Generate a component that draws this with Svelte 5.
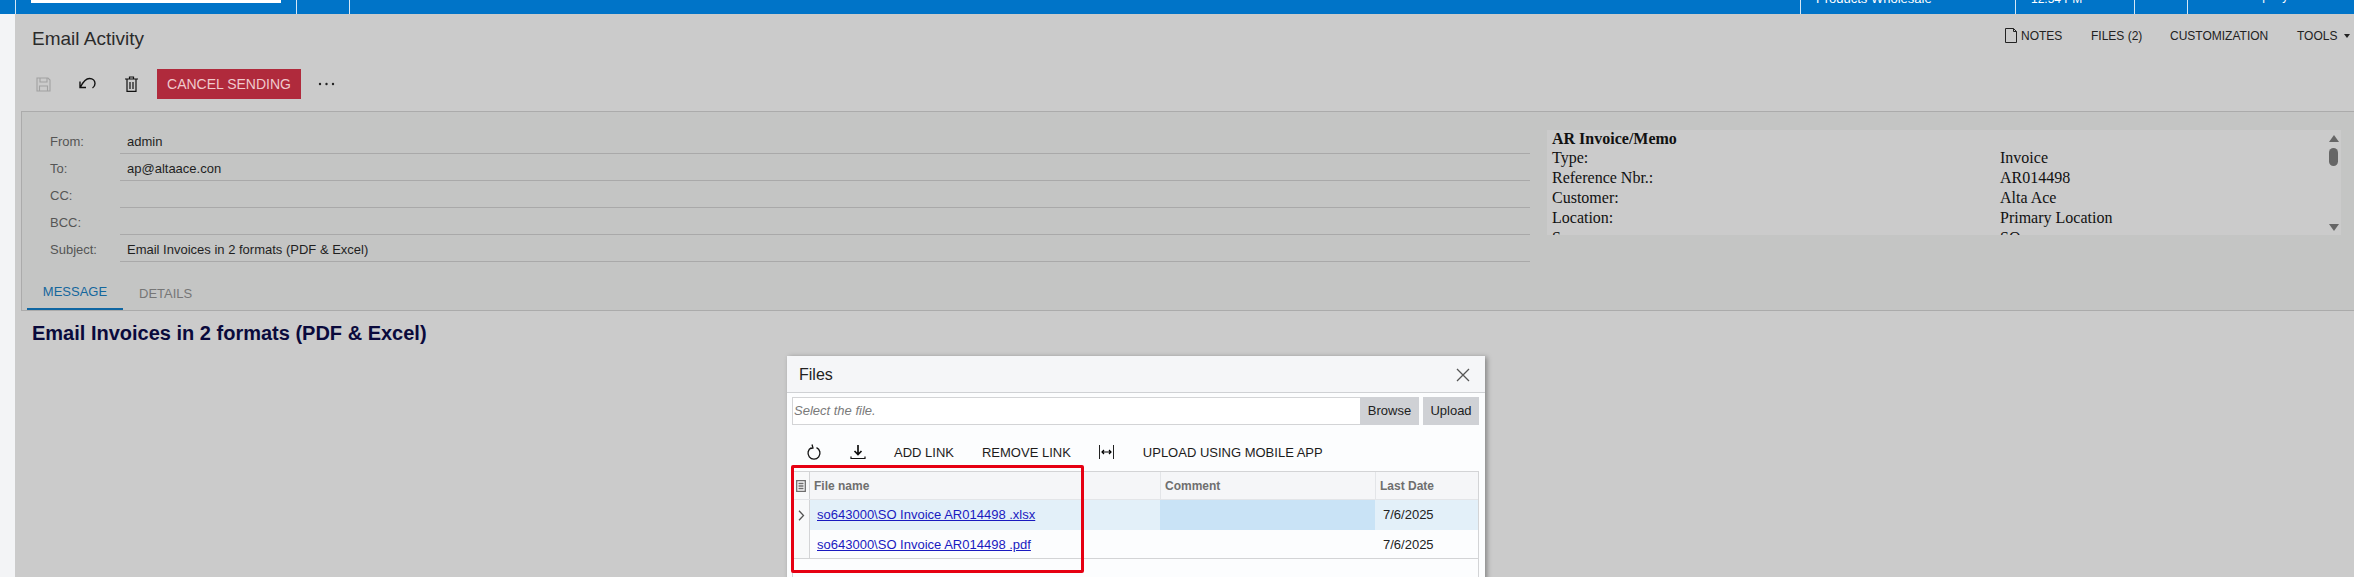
<script>
  const fields = [
    { label: 'From:', value: 'admin' },
    { label: 'To:', value: 'ap@altaace.con' },
    { label: 'CC:', value: '' },
    { label: 'BCC:', value: '' },
    { label: 'Subject:', value: 'Email Invoices in 2 formats (PDF & Excel)' }
  ];
  const summary = [
    ['Type:', 'Invoice'],
    ['Reference Nbr.:', 'AR014498'],
    ['Customer:', 'Alta Ace'],
    ['Location:', 'Primary Location'],
    ['Source:', 'SO']
  ];
  const files = [
    { name: 'so643000\\SO Invoice AR014498 .xlsx', date: '7/6/2025', active: true },
    { name: 'so643000\\SO Invoice AR014498 .pdf', date: '7/6/2025', active: false }
  ];
</script>

<div class="app">
  <header class="topbar">
    <div class="edge"></div>
    <div class="seg logo"><span class="logo-box"></span></div>
    <div class="seg s2"></div>
    <div class="seg grow"></div>
    <div class="seg s4"><span>Products Wholesale</span></div>
    <div class="seg s5"><span>12:54 PM</span></div>
    <div class="seg s6"></div>
    <div class="seg s7"><span>Company</span></div>
  </header>

  <div class="body">
    <div class="rail"></div>
    <main class="main">
      <div class="titlebar">
        <h1>Email Activity</h1>
        <nav class="links">
          <span class="link notes">
            <svg width="14" height="15" viewBox="0 0 14 15" fill="none" stroke="#222" stroke-width="1"><path d="M1.500.5h8l3 3v11h-11zM9.500.5v3h3"/></svg>
            NOTES
          </span>
          <span class="link files-l">FILES (2)</span>
          <span class="link cust">CUSTOMIZATION</span>
          <span class="link tools">TOOLS<i class="caret"></i></span>
        </nav>
      </div>

      <div class="toolbar">
        <span class="tb-icon i-save">
          <svg width="15" height="15" viewBox="0 0 15 15" fill="none" stroke="#a2a2a2" stroke-width="1.100"><path d="M1 1h11l2 2v11H1zM4 1v4h7V1M3.500 14V9h8v5"/></svg>
        </span>
        <span class="tb-icon i-undo">
          <svg width="17" height="14" viewBox="0 0 17 14" fill="none" stroke="#111" stroke-width="1.400"><path d="M1 4.500v6h6M1.500 10C4 5 7 1.500 10.500 1.500c3.500 0 5.500 2.500 5.500 5 0 2-1 3.500-2.500 4.500"/></svg>
        </span>
        <span class="tb-icon i-trash">
          <svg width="13" height="16" viewBox="0 0 13 16" fill="none" stroke="#111" stroke-width="1.200"><path d="M0 3h13M4.500 3V1h4v2M2 3v12.400h9V3M5 6v7M8 6v7"/></svg>
        </span>
        <button class="cancel">CANCEL SENDING</button>
        <span class="dots">
          <svg width="17" height="4" viewBox="0 0 17 4" fill="#222"><circle cx="2" cy="2" r="1.200"/><circle cx="8.500" cy="2" r="1.200"/><circle cx="15" cy="2" r="1.200"/></svg>
        </span>
      </div>

      <section class="form">
        <div class="form-top">
          <div class="fields">
            {#each fields as f}
              <div class="row">
                <label>{f.label}</label>
                <div class="val">{f.value}</div>
              </div>
            {/each}
          </div>
          <div class="summary">
            <div class="sum-body">
              <div class="sum-head">AR Invoice/Memo</div>
              {#each summary as s}
                <div class="sum-row"><span>{s[0]}</span><span>{s[1]}</span></div>
              {/each}
            </div>
            <div class="scroll">
              <i class="up"></i>
              <i class="thumb"></i>
              <i class="down"></i>
            </div>
          </div>
        </div>
        <div class="tabs">
          <span class="tab active">MESSAGE</span>
          <span class="tab">DETAILS</span>
        </div>
      </section>

      <h2 class="msg">Email Invoices in 2 formats (PDF &amp; Excel)</h2>
    </main>
  </div>

  <div class="modal">
    <div class="m-head">
      <span>Files</span>
      <svg width="14" height="14" viewBox="0 0 14 14" stroke="#555" stroke-width="1.300"><path d="M1 1l12 12M13 1L1 13"/></svg>
    </div>
    <div class="upload">
      <div class="file-input"><em>Select the file.</em><span class="browse">Browse</span></div>
      <span class="up-btn">Upload</span>
    </div>
    <div class="m-tools">
      <svg class="i1" width="16" height="18" viewBox="0 0 16 18" fill="none" stroke="#111" stroke-width="1.300"><path d="M10.500 4.700A6 6 0 1 1 5.500 4.700M6 1.500l1 3.500-3.500 1" /></svg>
      <svg class="i2" width="16" height="16" viewBox="0 0 16 16" fill="none" stroke="#111" stroke-width="1.700"><path d="M8 1v9M4.500 7L8 10.500 11.500 7" /><path d="M1 12.500v2h14v-2" stroke-width="1.200"/></svg>
      <span class="t-add">ADD LINK</span>
      <span class="t-rem">REMOVE LINK</span>
      <svg class="i3" width="15" height="14" viewBox="0 0 15 14" fill="none" stroke="#222" stroke-width="1"><path d="M.5 0v14M14.500 0v14" /><path d="M3 7h9M5 5L3 7l2 2M10 5l2 2-2 2" stroke="#000" stroke-width="1.200"/></svg>
      <span class="t-up">UPLOAD USING MOBILE APP</span>
    </div>
    <div class="grid">
      <div class="g-row g-head">
        <div class="gut">
          <svg width="10" height="12" viewBox="0 0 10 12" fill="none" stroke="#6e6e6e" stroke-width="1.300"><path d="M.7.7h8.600v10.600H.7zM2.500 3.500h5M2.500 6h5M2.500 8.500h5"/></svg>
        </div>
        <div class="c1">File name</div>
        <div class="c2">Comment</div>
        <div class="c3">Last Date</div>
      </div>
      {#each files as f}
        <div class="g-row body-row" class:active={f.active}>
          <div class="gut">
            {#if f.active}
              <svg width="7" height="11" viewBox="0 0 7 11" fill="none" stroke="#555" stroke-width="1.300"><path d="M1 .8l4.500 4.700L1 10.200"/></svg>
            {/if}
          </div>
          <div class="c1"><a href="#top">{f.name}</a></div>
          <div class="c2"></div>
          <div class="c3">{f.date}</div>
        </div>
      {/each}
    </div>
  </div>

  <div class="callout"></div>
</div>

<style>
  :global(body) { margin: 0; }
  .app {
    width: 2354px; height: 577px; overflow: hidden; position: relative;
    font-family: "Liberation Sans", Arial, sans-serif; color: #222;
    display: flex; flex-direction: column; background: #cbcbcb;
  }
  .topbar { height: 14px; flex: none; display: flex; background: #0074c8; overflow: hidden; }
  .edge { width: 15px; flex: none; }
  .seg {
    flex: none; border-left: 1px solid #d5e7f5; box-sizing: border-box; height: 14px;
    display: flex; align-items: flex-end; padding-left: 15px;
    color: #fff; font-size: 12px; line-height: 14px;
  }
  .seg span { position: relative; top: -8px; white-space: nowrap; }
  .logo { width: 281px; align-items: flex-start; }
  .logo .logo-box { top: 0; display: block; width: 250px; height: 3px; background: #fff; }
  .s2 { width: 53px; }
  .grow { flex: 1; }
  .s4 { width: 215px; font-size: 13px; }
  .s5 { width: 119px; }
  .s6 { width: 53px; }
  .s7 { width: 167px; padding-left: 49px; }
  .s7 span { top: -11px; }

  .body { flex: 1; display: flex; min-height: 0; }
  .rail { width: 15px; flex: none; background: #f3f4f6; }
  .main { flex: 1; min-width: 0; background: #cbcbcb; }

  .titlebar { height: 55px; display: flex; justify-content: space-between; align-items: flex-start; }
  h1 { margin: 14px 0 0 17px; font-size: 19px; line-height: 22px; font-weight: 400; color: #2b2b2b; }
  .links { display: flex; font-size: 12px; line-height: 14px; color: #222; margin-top: 14px; padding-right: 2px; }
  .link { display: flex; align-items: center; white-space: nowrap; }
  .notes svg { margin-right: 3px; }
  .notes { width: 87px; }
  .files-l { width: 79px; }
  .cust { width: 127px; }
  .tools { width: 55px; }
  .caret { margin-left: 7px; border: 3.500px solid transparent; border-top: 4px solid #222; border-bottom: 0; }

  .toolbar { height: 30px; display: flex; align-items: center; padding-left: 21px; margin-bottom: 12px; }
  .tb-icon { flex: none; display: flex; align-items: center; }
  .i-save { width: 43px; }
  .i-undo { width: 46px; }
  .i-trash { width: 32px; }
  .cancel {
    width: 144px; height: 30px; border: 0; padding: 0; background: #b02a3c; color: #efc9cd;
    font: 14px/30px "Liberation Sans", Arial, sans-serif;
  }
  .dots { margin-left: 17px; display: flex; }

  .form {
    margin-left: 6px; height: 200px; box-sizing: border-box; background: #c4c5c4;
    border-top: 1px solid #ababab; border-left: 1px solid #ababab; border-bottom: 1px solid #ababab;
    display: flex; flex-direction: column;
  }
  .form-top { height: 171px; flex: none; display: flex; }
  .fields { width: 1508px; padding-top: 15px; flex: none; }
  .row { height: 27px; display: flex; box-sizing: border-box; }
  label { width: 98px; flex: none; padding: 8px 0 0 28px; box-sizing: border-box; font-size: 13px; line-height: 14px; color: #555; }
  .val {
    flex: 1; border-bottom: 1px solid #a9a9a9; font-size: 13px; line-height: 14px; color: #1f1f1f;
    padding: 8px 0 0 7px; box-sizing: border-box;
  }
  .summary {
    margin: 18px 0 0 17px; width: 794px; height: 105px; background: #cbcbcb; display: flex; overflow: hidden;
    font-family: "Liberation Serif", "Times New Roman", serif; color: #111; font-size: 16px;
  }
  .sum-body { flex: 1; padding-left: 5px; }
  .sum-head { font-weight: 700; line-height: 18px; }
  .sum-row { display: grid; grid-template-columns: 448px 1fr; height: 20px; line-height: 20px; }
  .scroll { width: 13px; position: relative; flex: none; }
  .scroll i { position: absolute; display: block; }
  .up { left: 1px; top: 5px; border: 5px solid transparent; border-bottom: 7px solid #666; border-top: 0; }
  .down { left: 1px; top: 94px; border: 5px solid transparent; border-top: 7px solid #666; border-bottom: 0; }
  .thumb { left: 1px; top: 18px; width: 9px; height: 18px; border-radius: 4.500px; background: #666; }

  .tabs { height: 27px; display: flex; margin-left: 5px; flex: none; }
  .tab { box-sizing: border-box; flex: none; font-size: 13px; line-height: 14px; color: #767676; white-space: nowrap; }
  .tab.active { color: #14679d; width: 96px; text-align: center; border-bottom: 2px solid #0f66a2; padding-top: 2px; }
  .tab:not(.active) { padding-left: 16px; padding-top: 4px; }

  .msg { margin: 11px 0 0 17px; font-size: 20px; line-height: 22px; font-weight: 700; color: #0a0a3c; }

  .modal {
    position: absolute; left: 787px; top: 356px; width: 698px; height: 240px;
    background: #fcfdfe; box-shadow: 2px 1px 5px rgba(0,0,0,.35); box-sizing: border-box;
  }
  .m-head {
    height: 37px; box-sizing: border-box; background: #f5f6f8; border-bottom: 1px solid #cfd1d4;
    display: flex; align-items: center; justify-content: space-between; padding: 2px 15px 0 12px;
    font-size: 16px; color: #222;
  }
  .upload { display: flex; padding: 4px 6px 0 5px; height: 28px; gap: 4px; }
  .file-input {
    flex: 1; display: flex; justify-content: space-between; box-sizing: border-box; height: 28px;
    border: 1px solid #d3d4d6; border-right: 0; background: #fff; font-size: 13px; line-height: 26px;
  }
  em { color: #7a7a7a; padding-left: 1px; }
  .browse, .up-btn { background: #cfd1d5; color: #222; font-size: 13px; line-height: 28px; text-align: center; }
  .browse { width: 59px; margin: -1px 0; }
  .up-btn { width: 56px; }
  .m-tools { height: 46px; display: flex; align-items: center; font-size: 13px; color: #1c1c1c; white-space: nowrap; padding-top: 8px; box-sizing: border-box; }
  .i1 { margin-left: 19px; }
  .i2 { margin-left: 28px; }
  .t-add { margin-left: 28px; }
  .t-rem { margin-left: 28px; }
  .i3 { margin-left: 28px; }
  .t-up { margin-left: 29px; }

  .grid { margin: 0 6px 0 5px; border: 1px solid #d3d4d6; border-bottom: 0; height: 120px; font-size: 13px; box-sizing: border-box; }
  .g-row { display: flex; height: 29px; box-sizing: border-box; }
  .g-row > div { box-sizing: border-box; line-height: 28px; }
  .body-row > div { padding-top: 1px; }
  .g-row:last-child { border-bottom: 1px solid #d3d4d6; }
  .g-head { height: 28px; background: #f5f6f8; border-bottom: 1px solid #e3e5e8; color: #6f6f6f; font-weight: 700; font-size: 12px; }
  .g-row.active { height: 30px; }
  .g-row.active > div { line-height: 28px; }
  .gut { width: 17px; flex: none; border-right: 1px solid #d3d4d6; display: flex; align-items: center; justify-content: center; background: #f8f9fa; }
  .c1 { width: 350px; flex: none; padding-left: 4px; }
  .c2 { width: 215px; flex: none; }
  .c3 { flex: 1; padding-left: 8px; color: #222; }
  .g-head .c2, .g-head .c3 { border-left: 1px solid #e3e5e8; padding-left: 4px; color: #6f6f6f; }
  .g-row:not(.g-head) .c1 { padding-left: 7px; }
  .active .c1, .active .c3 { background: #e3f0f9; }
  .active .c2 { background: #c9e3f6; }
  a { color: #1a1ac0; text-decoration: underline; }

  .callout {
    position: absolute; left: 791px; top: 465px; width: 293px; height: 108px; box-sizing: border-box;
    border: 3px solid #e60012; border-radius: 2px;
  }
</style>
